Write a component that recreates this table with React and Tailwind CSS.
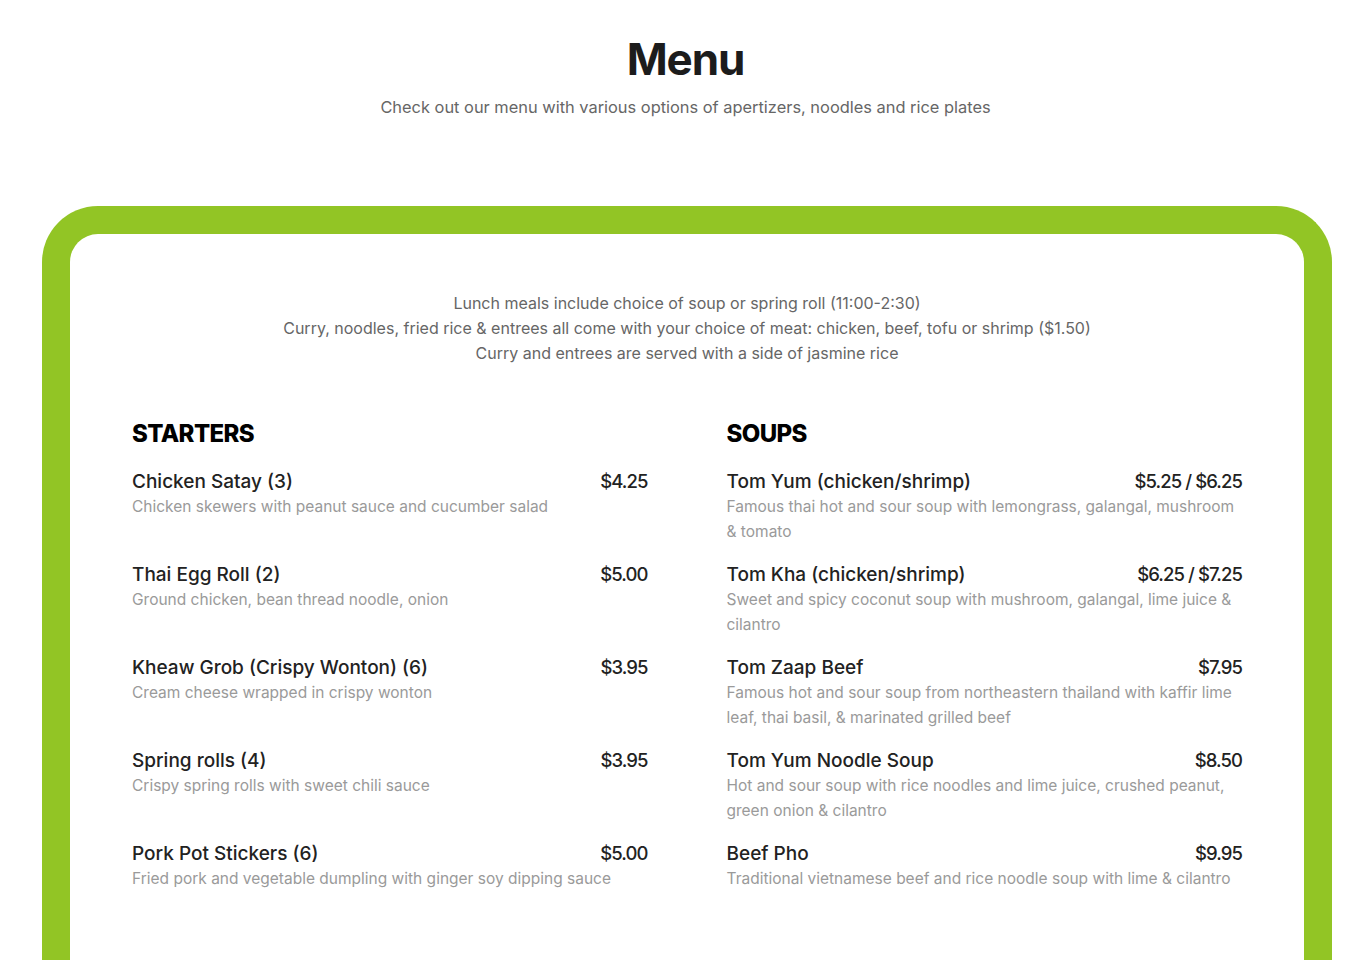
const starters = [
  { name: "Chicken Satay (3)", price: "$4.25", desc: "Chicken skewers with peanut sauce and cucumber salad" },
  { name: "Thai Egg Roll (2)", price: "$5.00", desc: "Ground chicken, bean thread noodle, onion" },
  { name: "Kheaw Grob (Crispy Wonton) (6)", price: "$3.95", desc: "Cream cheese wrapped in crispy wonton" },
  { name: "Spring rolls (4)", price: "$3.95", desc: "Crispy spring rolls with sweet chili sauce" },
  { name: "Pork Pot Stickers (6)", price: "$5.00", desc: "Fried pork and vegetable dumpling with ginger soy dipping sauce" },
];

const soups = [
  { name: "Tom Yum (chicken/shrimp)", price: "$5.25 / $6.25", desc: "Famous thai hot and sour soup with lemongrass, galangal, mushroom & tomato" },
  { name: "Tom Kha (chicken/shrimp)", price: "$6.25 / $7.25", desc: "Sweet and spicy coconut soup with mushroom, galangal, lime juice & cilantro" },
  { name: "Tom Zaap Beef", price: "$7.95", desc: "Famous hot and sour soup from northeastern thailand with kaffir lime leaf, thai basil, & marinated grilled beef" },
  { name: "Tom Yum Noodle Soup", price: "$8.50", desc: "Hot and sour soup with rice noodles and lime juice, crushed peanut, green onion & cilantro" },
  { name: "Beef Pho", price: "$9.95", desc: "Traditional vietnamese beef and rice noodle soup with lime & cilantro" },
];

const MenuColumn = ({ title, items }) => (
  <div className="flex flex-col">
    <h3 className="text-[24px] leading-8 font-extrabold text-black tracking-tight">{title}</h3>
    <div className="mt-[19px] flex flex-col gap-[18px]">
      {items.map((item) => (
        <div key={item.name} className="min-h-[75px]">
          <div className="flex items-center justify-between gap-4 text-[19px] leading-[25px] text-[#222]">
            <span className="font-medium">{item.name}</span>
            <span className="text-[18.5px] font-medium tracking-[-0.05em] whitespace-nowrap">{item.price}</span>
          </div>
          <p className="text-[15.5px] leading-[25px] text-[#9a9a9a]">{item.desc}</p>
        </div>
      ))}
    </div>
  </div>
);

export default function App() {
  return (
    <div className="min-h-screen bg-white font-['Inter',sans-serif] overflow-hidden">
      <header className="pt-[30px] text-center">
        <h1 className="text-[44px] leading-[58px] font-bold text-[#1c1c1c] tracking-tight">Menu</h1>
        <p className="mt-[7px] text-[16.4px] leading-6 text-[#666]">
          Check out our menu with various options of apertizers, noodles and rice plates
        </p>
      </header>

      <section className="ml-[42px] mt-[87px] w-[1290px] rounded-t-[56px] border-[28px] border-b-0 border-[#92c525] bg-white px-[62px] pt-[57px] pb-16">
        <div className="text-center text-[16px] leading-[25px] text-[#666]">
          <p>Lunch meals include choice of soup or spring roll (11:00-2:30)</p>
          <p>Curry, noodles, fried rice &amp; entrees all come with your choice of meat: chicken, beef, tofu or shrimp ($1.50)</p>
          <p>Curry and entrees are served with a side of jasmine rice</p>
        </div>

        <div className="mt-[52px] grid grid-cols-2 gap-x-[79px]">
          <MenuColumn title="STARTERS" items={starters} />
          <MenuColumn title="SOUPS" items={soups} />
        </div>
      </section>
    </div>
  );
}
